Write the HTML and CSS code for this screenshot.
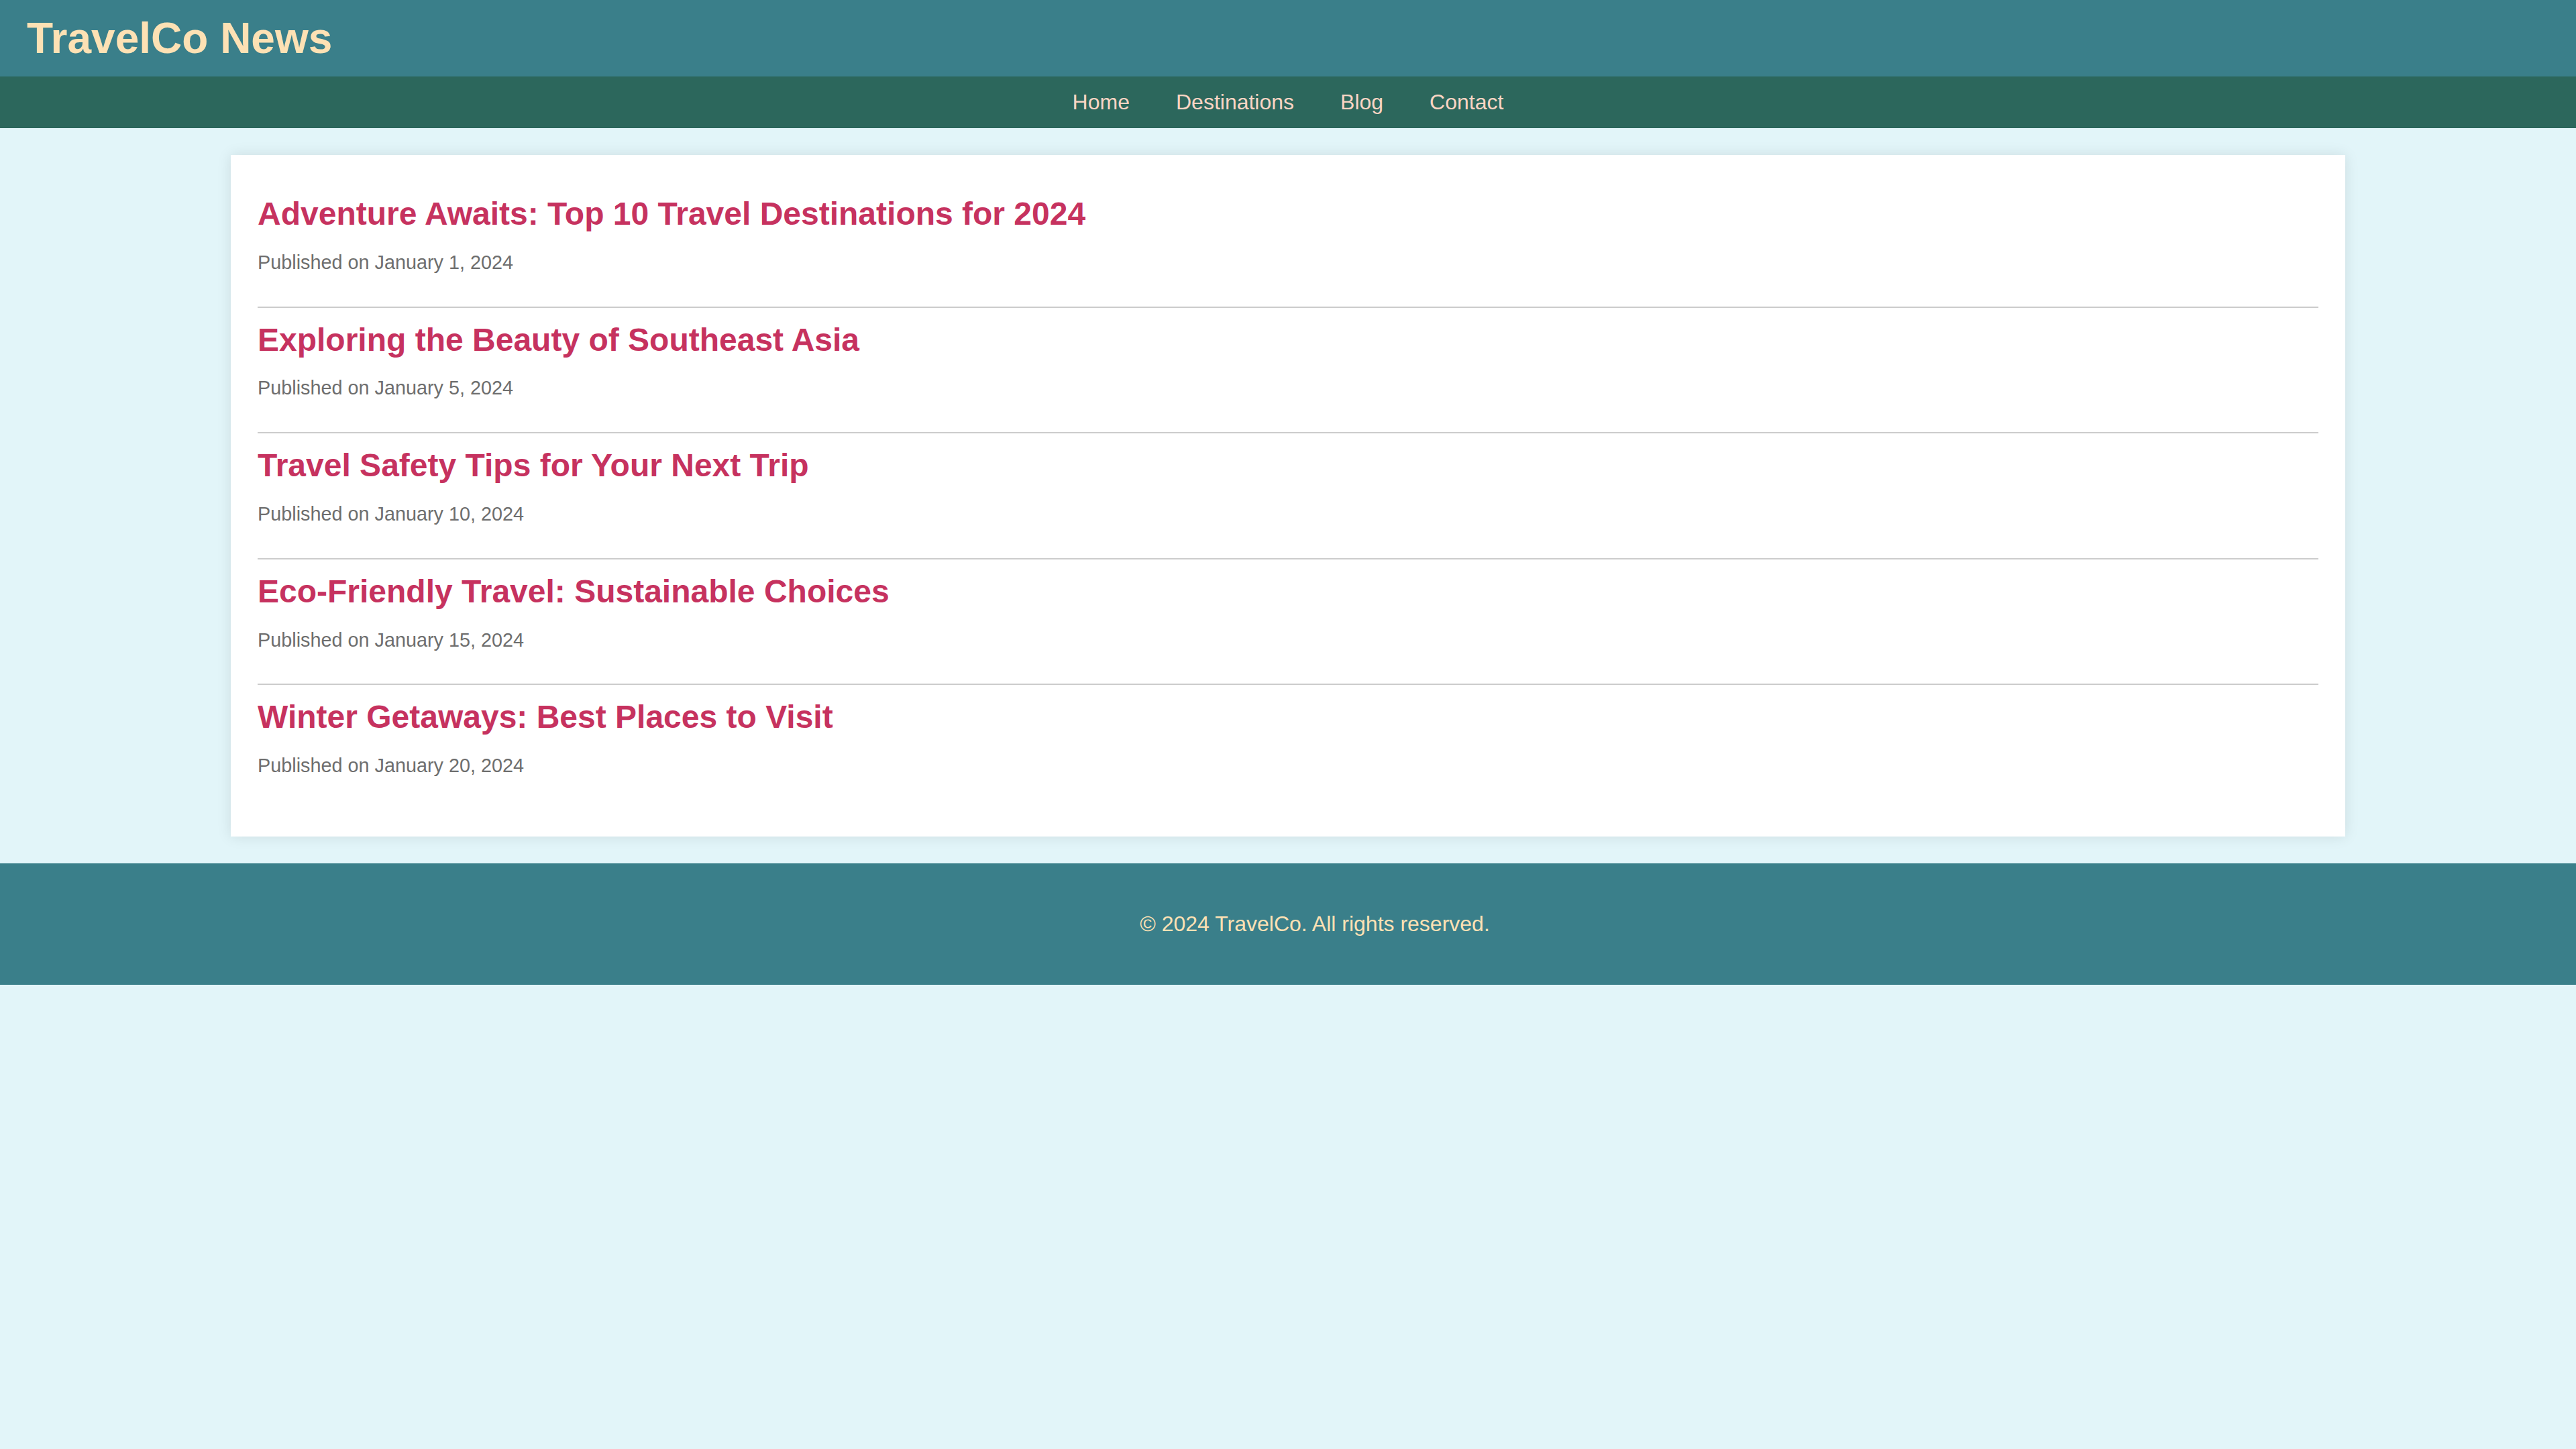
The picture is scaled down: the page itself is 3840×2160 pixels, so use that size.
FILE: index.html
```html
<!DOCTYPE html>
<html lang="en">
<head>
<meta charset="utf-8">
<title>TravelCo News</title>
<link rel="stylesheet" href="styles.css">
</head>
<body>
<header class="site-header">
  <h1 class="site-title">TravelCo News</h1>
</header>
<nav class="site-nav">
  <a href="#" class="nav-link">Home</a>
  <a href="#" class="nav-link">Destinations</a>
  <a href="#" class="nav-link">Blog</a>
  <a href="#" class="nav-link">Contact</a>
</nav>
<main class="container">
  <article class="post">
    <h2 class="post-title">Adventure Awaits: Top 10 Travel Destinations for 2024</h2>
    <p class="post-date">Published on January 1, 2024</p>
  </article>
  <article class="post">
    <h2 class="post-title">Exploring the Beauty of Southeast Asia</h2>
    <p class="post-date">Published on January 5, 2024</p>
  </article>
  <article class="post">
    <h2 class="post-title">Travel Safety Tips for Your Next Trip</h2>
    <p class="post-date">Published on January 10, 2024</p>
  </article>
  <article class="post">
    <h2 class="post-title">Eco-Friendly Travel: Sustainable Choices</h2>
    <p class="post-date">Published on January 15, 2024</p>
  </article>
  <article class="post">
    <h2 class="post-title">Winter Getaways: Best Places to Visit</h2>
    <p class="post-date">Published on January 20, 2024</p>
  </article>
</main>
<footer class="site-footer">
  <p class="footer-text">© 2024 TravelCo. All rights reserved.</p>
</footer>
</body>
</html>
```

FILE: styles.css
```css
html, body {
  margin: 0;
  padding: 0;
}

body {
  background: #e2f5f9;
  font-family: "Liberation Sans", Arial, sans-serif;
  font-size: 32px;
  color: #333;
}

.site-header {
  background: #3a7f8a;
  padding: 20px 40px;
}

.site-title {
  margin: 0;
  font-size: 64px;
  font-weight: bold;
  color: #fde1b4;
}

.site-nav {
  background: #2c675c;
  padding: 20px;
  display: flex;
  justify-content: center;
  gap: 69px;
}

.nav-link {
  color: #fad5c4;
  text-decoration: none;
  font-size: 32px;
}

.container {
  width: 3072px;
  margin: 40px auto;
  padding: 40px;
  background: #fff;
  box-shadow: 0 0 20px rgba(0, 0, 0, 0.1);
}

.post {
  padding: 20px 0;
  border-bottom: 2px solid #cccccc;
}

.post:last-child {
  border-bottom: none;
}

.post-title {
  margin: 0;
  font-size: 48px;
  font-weight: bold;
  color: #c6325f;
}

.post-date {
  margin: 28.8px 0;
  font-size: 28.8px;
  color: #6e6e6e;
}

.site-footer {
  background: #3a7f8a;
  padding: 40px 0 40px 80px;
  text-align: center;
}

.footer-text {
  margin: 32px 0;
  font-size: 32px;
  color: #fde1b4;
}
```
